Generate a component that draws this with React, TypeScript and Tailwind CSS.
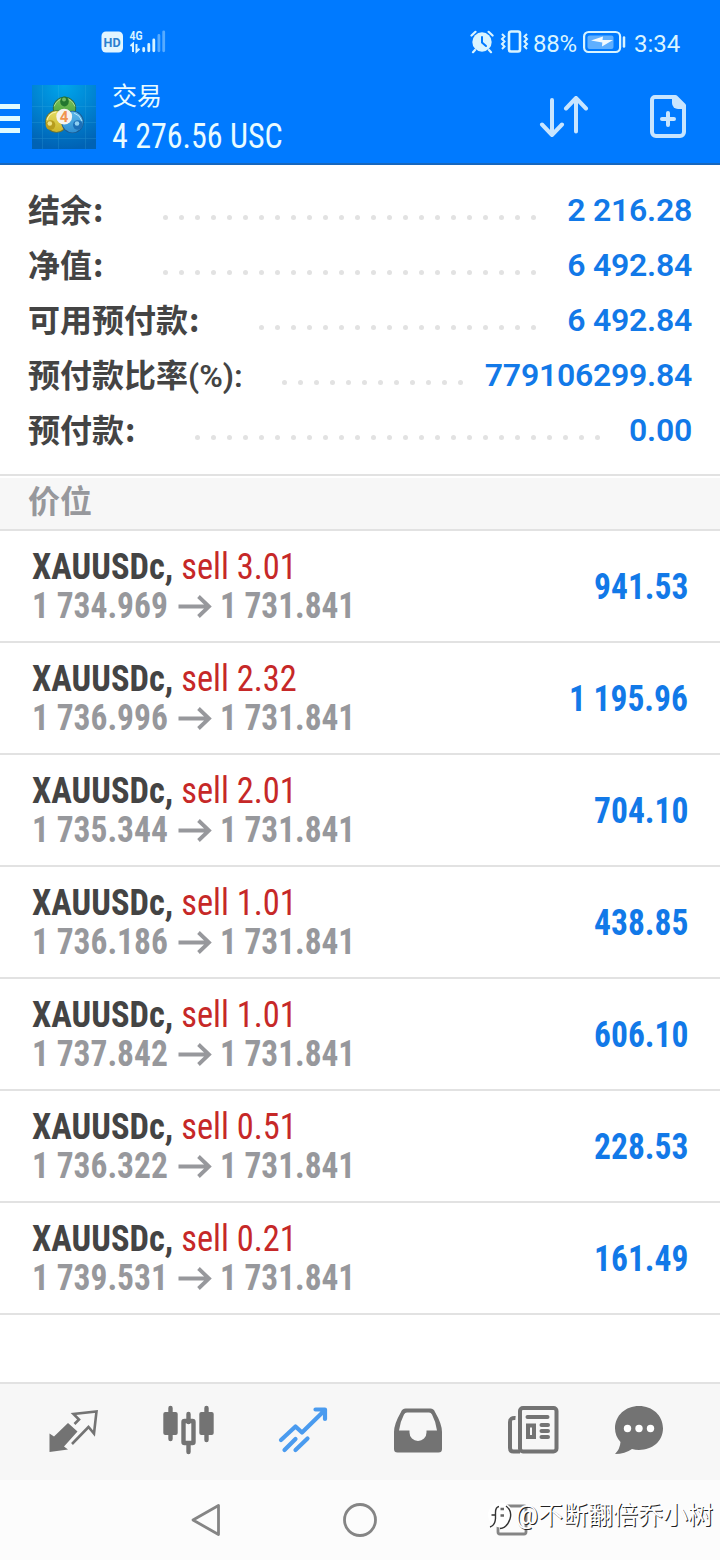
import clsx from "clsx";

type SummaryRow = { label: string; value: string; labelClass: string; dots: number };

const SUMMARY: SummaryRow[] = [
  { label: "结余:", value: "2 216.28", labelClass: "w-[135px]", dots: 24 },
  { label: "净值:", value: "6 492.84", labelClass: "w-[135px]", dots: 24 },
  { label: "可用预付款:", value: "6 492.84", labelClass: "w-[231px]", dots: 18 },
  { label: "预付款比率(%):", value: "779106299.84", labelClass: "w-[254px]", dots: 12 },
  { label: "预付款:", value: "0.00", labelClass: "w-[167px]", dots: 26 },
];

const POSITIONS = [
  { volume: "3.01", open: "1 734.969", profit: "941.53" },
  { volume: "2.32", open: "1 736.996", profit: "1 195.96" },
  { volume: "2.01", open: "1 735.344", profit: "704.10" },
  { volume: "1.01", open: "1 736.186", profit: "438.85" },
  { volume: "1.01", open: "1 737.842", profit: "606.10" },
  { volume: "0.51", open: "1 736.322", profit: "228.53" },
  { volume: "0.21", open: "1 739.531", profit: "161.49" },
];

const CURRENT_PRICE = "1 731.841";

function StatusBar() {
  return (
    <div className="flex h-[84px] items-center pl-[101px] pr-[39px] text-[#d9f4ff]">
      <svg width="66" height="28" viewBox="0 -2 66 28" className="font-[Roboto]">
        <rect x="0.5" y="1.5" width="21.5" height="21" rx="4.5" fill="#e2f5ff" />
        <text x="2.6" y="17" fontSize="13.5" fontWeight="700" fill="#2a80d0" textLength="17" lengthAdjust="spacingAndGlyphs">HD</text>
        <text x="28.5" y="10" fontSize="13.5" fontWeight="700" fill="#d9f4ff" textLength="13" lengthAdjust="spacingAndGlyphs">4G</text>
        <path d="M29.5 16l2.5-2.2V22M35.5 14v7.5l3-2.7" fill="none" stroke="#d9f4ff" strokeWidth="2" />
        <g stroke="#d9f4ff" strokeWidth="2.8" strokeLinecap="round">
          <path d="M42.7 18.5v2.3M47.8 14.5v6.3M52.8 10v10.8" />
          <path d="M57.9 5.5v15.3M62.7 1.8v19" opacity=".4" />
        </g>
      </svg>

      <svg width="59" height="24" viewBox="0 0 59 24" className="ml-auto">
        <circle cx="12" cy="12" r="9.7" fill="#d9f4ff" />
        <path d="M1.5 5.5 5.5 1.8M18.6 1.8l4 3.7M5 20l-2 2.2M19 20l2 2.2" stroke="#d9f4ff" strokeWidth="2.2" strokeLinecap="round" />
        <path d="M12 7v5.5l4 3.5" fill="none" stroke="#007aff" strokeWidth="2" strokeLinecap="round" />
        <rect x="39" y="1.5" width="11" height="20" rx="2" fill="none" stroke="#d9f4ff" strokeWidth="2.6" />
        <path d="M32 4l2.5 2.5-2.5 2.5 2.5 2.5-2.5 2.5 2.5 2.5-2.5 2.5M57 4l-2.5 2.5 2.5 2.5-2.5 2.5 2.5 2.5-2.5 2.5 2.5 2.5" fill="none" stroke="#d9f4ff" strokeWidth="2" />
      </svg>
      <span className="ml-1 mt-[3px] w-[50px] whitespace-nowrap text-[24px] leading-none tracking-[-0.2px]">88%</span>
      <svg width="43" height="24" viewBox="0 0 43 24">
        <rect x="1.1" y="2" width="36" height="20" rx="4.5" fill="none" stroke="#d9f4ff" strokeWidth="2.2" />
        <rect x="4.5" y="5.5" width="26" height="13.5" rx="2" fill="#5fafff" />
        <path d="M8 10.5 20 6.5l-.5 3.5H30l-11 6.5.3-4z" fill="#f2faff" />
        <path d="M41 7.5v9" stroke="#d9f4ff" strokeWidth="2.5" strokeLinecap="round" />
      </svg>
      <span className="ml-2 mt-[3px] w-[47px] whitespace-nowrap text-[24px] leading-none">3:34</span>
    </div>
  );
}

function AppLogo() {
  return (
    <svg width="64" height="64" viewBox="0 0 64 64">
      <defs>
        <radialGradient id="logo-bg" cx=".5" cy="0" r="1">
          <stop offset="0" stopColor="#00a6ec" />
          <stop offset=".5" stopColor="#0084d2" />
          <stop offset="1" stopColor="#0062b4" />
        </radialGradient>
        <linearGradient id="logo-green" x2="0" y2="1">
          <stop offset="0" stopColor="#7fc35a" />
          <stop offset="1" stopColor="#3c9c3a" />
        </linearGradient>
        <linearGradient id="logo-gold" x2="0" y2="1">
          <stop offset="0" stopColor="#e3dc62" />
          <stop offset="1" stopColor="#cdb52a" />
        </linearGradient>
        <linearGradient id="logo-blue" x2="0" y2="1">
          <stop offset="0" stopColor="#5db8ea" />
          <stop offset="1" stopColor="#2f8fd2" />
        </linearGradient>
      </defs>
      <rect width="64" height="64" fill="url(#logo-bg)" />
      <path d="M10.5 0v64M26.5 0v64M53.5 0v64M0 21.5h64M0 53.5h64M0 37.5h64" stroke="#4fc0ea" strokeWidth=".6" opacity=".3" />
      <circle cx="32.5" cy="23.5" r="11.7" fill="#2b6b42" />
      <circle cx="32.5" cy="23.5" r="10.7" fill="url(#logo-green)" />
      <circle cx="24.5" cy="36.5" r="11.3" fill="#6b7433" />
      <circle cx="24.5" cy="36.5" r="10.4" fill="url(#logo-gold)" />
      <circle cx="40.5" cy="37" r="11.3" fill="#1c5c92" />
      <circle cx="40.5" cy="37" r="10.4" fill="url(#logo-blue)" />
      <path d="M22 21.5q3-8 10.5-8t10.500 8" fill="none" stroke="#bfe6a0" strokeWidth="1" opacity=".8" />
      <path d="M15 35q2-7 9-8" fill="none" stroke="#faf6b4" strokeWidth="1" />
      <path d="M42 28q6 2 8 8" fill="none" stroke="#b5e3fa" strokeWidth="1" />
      <ellipse cx="32.5" cy="16.5" rx="4.3" ry="5" fill="#23762f" />
      <circle cx="18.5" cy="40" r="4.8" fill="#b69c1e" />
      <circle cx="45.8" cy="40" r="4.8" fill="#1d70b8" />
      <circle cx="32" cy="14.5" r="2" fill="#70b865" />
      <circle cx="17.8" cy="38.5" r="2.3" fill="#efe386" />
      <circle cx="45" cy="38.5" r="2.3" fill="#8fd0f2" />
      <circle cx="32.2" cy="31.7" r="7.9" fill="#f5f3ee" />
      <text x="32" y="37" textAnchor="middle" fontSize="15" fontWeight="700" fill="#f0944e">4</text>
    </svg>
  );
}

function Header() {
  return (
    <header className="h-[165px] border-b-2 border-[#1767bd] bg-[#007aff]">
      <StatusBar />
      <div className="flex h-[66px] items-center">
        <div className="mt-0.5 flex w-5 flex-col gap-[7px]">
          <div className="h-[5px] bg-[#e0fbff]" />
          <div className="h-[5px] bg-[#e0fbff]" />
          <div className="h-[5px] bg-[#e0fbff]" />
        </div>
        <div className="ml-3">
          <AppLogo />
        </div>
        <div className="ml-4 mt-[6px] text-[#e9fbff]">
          <div className="text-[25px] leading-[27px]">交易</div>
          <div className="mt-[7px] origin-left scale-x-[0.915] whitespace-nowrap text-[35px] leading-[40px] font-stretch-[75%]">4 276.56 USC</div>
        </div>
        <svg width="50" height="42" viewBox="0 0 50 42" className="ml-auto" fill="none" stroke="#c8e5ff" strokeWidth="4" strokeLinecap="round" strokeLinejoin="round">
          <path d="M13 4v35M3 28.5 13 39l10-10.5M37 35.5V1.9M27 12.5 37 2l10 10.5" />
        </svg>
        <svg width="36" height="46" viewBox="0 0 36 46" className="ml-[61px] mr-[34px]">
          <path d="M5 3h20.5L34 11.5V38a4 4 0 0 1-4 4H6a4 4 0 0 1-4-4V6a3 3 0 0 1 3-3z" fill="none" stroke="#c8e5ff" strokeWidth="4" strokeLinejoin="round" />
          <path d="M22 2h4l9 9v4h-7a6 6 0 0 1-6-6z" fill="#c8e5ff" />
          <path d="M18 19v12M12 25h12" stroke="#c8e5ff" strokeWidth="4" strokeLinecap="round" />
        </svg>
      </div>
    </header>
  );
}

function Summary() {
  return (
    <section className="h-[311px] border-b-2 border-[#e2e2e2] pl-7 pr-7 pt-[17px]">
      {SUMMARY.map((row) => (
        <div key={row.label} className="flex h-[55px] items-center">
          <div
            className={clsx(
              "shrink-0 whitespace-nowrap text-[32px] leading-[40px] font-bold text-[#444]",
              row.labelClass,
            )}
          >
            {row.label.includes("(") ? (
              <span className="relative top-px">
                预付款比率<span className="font-semibold">(%):</span>
              </span>
            ) : (
              <span className="font-['Noto_Sans_CJK_SC',sans-serif]">
                {row.label.slice(0, -1)}
                <span className="ml-px">:</span>
              </span>
            )}
          </div>
          <div className="mt-[15px] flex gap-[11px]">
            {Array.from({ length: row.dots }, (_, i) => (
              <div key={i} className="size-[5px] rounded-full bg-[#e2e2e2]" />
            ))}
          </div>
          <div className="ml-auto whitespace-nowrap text-[32px] leading-none font-semibold tracking-[-0.25px] text-[#1279e8]">
            {row.value}
          </div>
        </div>
      ))}
    </section>
  );
}

function PositionRow({ volume, open, profit }: (typeof POSITIONS)[number]) {
  return (
    <div className="flex h-[112px] items-center border-b-2 border-[#e2e2e2] pl-8 pr-8 pt-0.5 font-stretch-[75%]">
      <div className="whitespace-nowrap text-[36px] leading-[39px]">
        <div className="origin-left scale-x-[0.957]">
          <span className="font-bold text-[#444]">XAUUSDc, </span>
          <span className="text-[#c62828]">sell {volume}</span>
        </div>
        <div className="flex items-center font-bold text-[#97989c]">
          <span className="w-[146px] origin-left scale-x-[0.93]">{open}</span>
          <svg width="34" height="24" viewBox="0 0 34 24" className="-mt-0.5" fill="none" stroke="currentColor" strokeWidth="3.8">
            <path d="M0.5 12.5H31M20.5 2.5l10.5 10-10.5 10" />
          </svg>
          <span className="ml-2 origin-left scale-x-[0.925]">{CURRENT_PRICE}</span>
        </div>
      </div>
      <div className="ml-auto origin-right scale-x-[0.93] whitespace-nowrap text-[36px] leading-none font-bold text-[#1279e8]">{profit}</div>
    </div>
  );
}

function TabBar() {
  return (
    <nav className="flex h-[98px] items-center border-t-2 border-[#e2e2e2] bg-[#f7f7f7] pb-1 pl-[15px] text-[#737373]">
      <div className="flex w-[115px] justify-center">
        <svg width="50" height="50" viewBox="0 -4.5 50 50">
          <path d="M1.5 24 6 27 20 13.5 29.5 22 16 37l4 3-18.5 2.5z" fill="currentColor" />
          <path d="M26.5 14.5 31 10l-5.5-5.5L48.5 2 46 24l-5.5-6.5L24 34.5" fill="none" stroke="currentColor" strokeWidth="2.6" />
        </svg>
      </div>
      <div className="flex w-[115px] justify-center">
        <svg width="52" height="50" viewBox="0 0 52 50">
          <path d="M8.5 3v31M44.5 3v32M26.5 9v8M26.5 40v7" stroke="currentColor" strokeWidth="4.4" strokeLinecap="round" />
          <rect x="1.3" y="7" width="14.4" height="23" rx="2" fill="currentColor" />
          <rect x="37.3" y="7" width="14.4" height="23" rx="2" fill="currentColor" />
          <rect x="21.5" y="16" width="10" height="22" rx="1" fill="none" stroke="currentColor" strokeWidth="4.4" />
        </svg>
      </div>
      <div className="flex w-[115px] justify-center">
        <svg width="50" height="50" viewBox="0 0 50 50" fill="none" stroke="#4a9bef" strokeWidth="4.2" strokeLinecap="round" strokeLinejoin="round">
          <path d="M3 35 17.5 21.5l6.5 6L47 5M37.5 4.5H47V14M6.5 45 17.5 34M17.5 45l12-11.5" />
        </svg>
      </div>
      <div className="flex w-[115px] justify-center">
        <svg width="50" height="50" viewBox="0 0 50 50">
          <path
            d="M13 3.5h24a5 5 0 0 1 5 3.5q7 12 7 20v17a3.5 3.5 0 0 1-3.5 3.5h-41A3.5 3.5 0 0 1 1 44V27q0-8 7-20a5 5 0 0 1 5-3.5zM14 7.5q-2 0-3 2Q7 17 6 25.5h10.5v2a8.5 8.5 0 0 0 17 0v-2H44Q43 17 39 9.5q-1-2-3-2z"
            fill="currentColor"
            fillRule="evenodd"
          />
        </svg>
      </div>
      <div className="flex w-[115px] justify-center">
        <svg width="52" height="50" viewBox="0 0 52 50" fill="none" stroke="currentColor" strokeWidth="4" strokeLinecap="round">
          <rect x="13" y="3" width="36.5" height="43.5" rx="3" />
          <path d="M8.5 13Q3 12.5 3 17v26q0 3.5 3.500 3.500H13" strokeLinecap="butt" />
          <path d="M20.5 12h20M34.5 20H41M34.5 26H41M34.5 32H41" />
          <rect x="21" y="20.5" width="6" height="11.5" />
        </svg>
      </div>
      <div className="flex w-[97px] justify-center">
        <svg width="50" height="50" viewBox="0 0 50 50">
          <path d="M25 1c13.5 0 24 9.5 24 22.3S38.5 45 25 45q-4 0-7-1-7 5-17 5 5-5 5.5-12Q1 31 1 23.3C1 10.5 11.5 1 25 1z" fill="currentColor" />
          <circle cx="13.5" cy="23.5" r="3.7" fill="#fff" />
          <circle cx="25" cy="23.5" r="3.7" fill="#fff" />
          <circle cx="36.5" cy="23.5" r="3.7" fill="#fff" />
        </svg>
      </div>
    </nav>
  );
}

function SystemNav() {
  return (
    <div className="relative flex h-20 items-center bg-[#fcfcfc] pl-[190px]">
      <svg width="32" height="36" viewBox="0 0 32 36" fill="none" stroke="#858585" strokeWidth="2.8" strokeLinejoin="round">
        <path d="M3 18 28.5 3.5v29z" />
      </svg>
      <svg width="36" height="36" viewBox="0 0 36 36" className="ml-[120px]" fill="none" stroke="#858585" strokeWidth="2.8">
        <circle cx="18" cy="18" r="15.5" />
      </svg>
      <svg width="32" height="32" viewBox="0 0 32 32" className="ml-[118px]" fill="none" stroke="#858585" strokeWidth="2.8">
        <rect x="2" y="2" width="28" height="28" rx="2" />
      </svg>
      {/* watermark over the recents button */}
      <div className="absolute right-[7px] top-[19px] flex items-center whitespace-nowrap text-[25px] leading-[34px] text-white [text-shadow:1px_1px_0_#222]">
        <svg width="28" height="30" viewBox="0 0 28 30">
          <circle cx="12.5" cy="14" r="12.5" fill="#fff" />
          <path d="M11 5.5q-3.5.5-3.5 6v6q-.5 7-5.5 8.5M3.5 14h4M18 5q6.5 5 4 13-3 9-10 9.5" fill="none" stroke="#333" strokeWidth="1.4" />
          <path d="M12.5 8h3.5M12.5 14.5h3.5" stroke="#666" strokeWidth="2.5" />
        </svg>
        @不断翻倍乔小树
      </div>
    </div>
  );
}

export default function App() {
  return (
    <div className="flex h-[1560px] w-[720px] flex-col overflow-hidden bg-white font-[Roboto,'Noto_Sans_CJK_SC',sans-serif]">
      <Header />
      <Summary />
      <div className="mt-0.5 flex h-[53px] items-center border-b-2 border-[#e2e2e2] bg-[#f7f7f7] pb-1 pl-7 text-[32px] leading-none font-bold text-[#97989c]">
        价位
      </div>
      <main className="flex-1">
        {POSITIONS.map((p) => (
          <PositionRow key={p.open} {...p} />
        ))}
      </main>
      <TabBar />
      <SystemNav />
    </div>
  );
}
